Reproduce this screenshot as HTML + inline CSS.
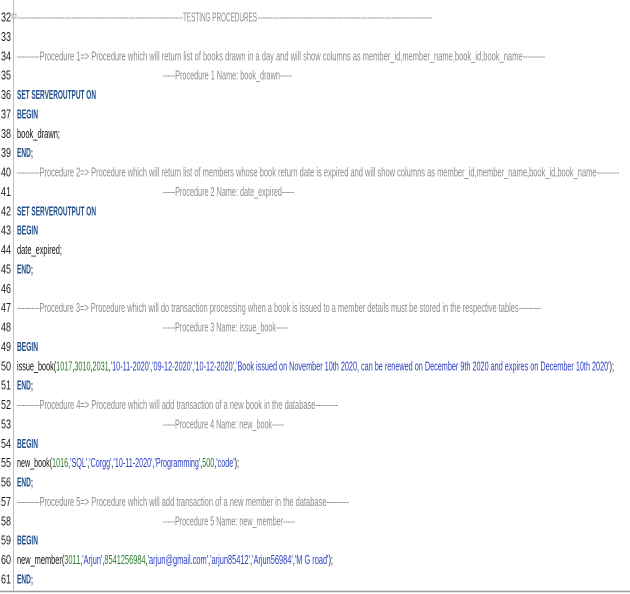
<!DOCTYPE html>
<html><head><meta charset="utf-8"><style>
html,body{margin:0;padding:0;background:#fff;width:630px;height:594px;overflow:hidden}
svg{display:block}
text{font-family:"Liberation Sans",sans-serif;font-size:12.5px}
.n{fill:#222;font-size:13px}
.c{fill:#8c8c8c}
.k{fill:#1f4e8c;font-weight:bold}
.g{fill:#2e7d32}
.s{fill:#2b3fc4}
.p{fill:#111}
</style></head><body>
<svg width="630" height="594" xmlns="http://www.w3.org/2000/svg">
<line x1="13.5" y1="0" x2="13.5" y2="591" stroke="#bdbdbd" stroke-width="1"/>
<line x1="0" y1="591.5" x2="630" y2="591.5" stroke="#9a9a9a" stroke-width="1.5"/>
<rect x="12" y="14" width="4" height="4" fill="none" stroke="#888" stroke-width="0.6"/>
<g>
<text x="1" y="21.5" class="n" textLength="10" lengthAdjust="spacingAndGlyphs">32</text>
<text x="1" y="40.9" class="n" textLength="10" lengthAdjust="spacingAndGlyphs">33</text>
<text x="1" y="60.3" class="n" textLength="10" lengthAdjust="spacingAndGlyphs">34</text>
<text x="1" y="79.6" class="n" textLength="10" lengthAdjust="spacingAndGlyphs">35</text>
<text x="1" y="99" class="n" textLength="10" lengthAdjust="spacingAndGlyphs">36</text>
<text x="1" y="118.4" class="n" textLength="10" lengthAdjust="spacingAndGlyphs">37</text>
<text x="1" y="137.8" class="n" textLength="10" lengthAdjust="spacingAndGlyphs">38</text>
<text x="1" y="157.2" class="n" textLength="10" lengthAdjust="spacingAndGlyphs">39</text>
<text x="1" y="176.5" class="n" textLength="10" lengthAdjust="spacingAndGlyphs">40</text>
<text x="1" y="195.9" class="n" textLength="10" lengthAdjust="spacingAndGlyphs">41</text>
<text x="1" y="215.3" class="n" textLength="10" lengthAdjust="spacingAndGlyphs">42</text>
<text x="1" y="234.7" class="n" textLength="10" lengthAdjust="spacingAndGlyphs">43</text>
<text x="1" y="254.1" class="n" textLength="10" lengthAdjust="spacingAndGlyphs">44</text>
<text x="1" y="273.4" class="n" textLength="10" lengthAdjust="spacingAndGlyphs">45</text>
<text x="1" y="292.8" class="n" textLength="10" lengthAdjust="spacingAndGlyphs">46</text>
<text x="1" y="312.2" class="n" textLength="10" lengthAdjust="spacingAndGlyphs">47</text>
<text x="1" y="331.6" class="n" textLength="10" lengthAdjust="spacingAndGlyphs">48</text>
<text x="1" y="350.9" class="n" textLength="10" lengthAdjust="spacingAndGlyphs">49</text>
<text x="1" y="370.3" class="n" textLength="10" lengthAdjust="spacingAndGlyphs">50</text>
<text x="1" y="389.7" class="n" textLength="10" lengthAdjust="spacingAndGlyphs">51</text>
<text x="1" y="409.1" class="n" textLength="10" lengthAdjust="spacingAndGlyphs">52</text>
<text x="1" y="428.5" class="n" textLength="10" lengthAdjust="spacingAndGlyphs">53</text>
<text x="1" y="447.8" class="n" textLength="10" lengthAdjust="spacingAndGlyphs">54</text>
<text x="1" y="467.2" class="n" textLength="10" lengthAdjust="spacingAndGlyphs">55</text>
<text x="1" y="486.6" class="n" textLength="10" lengthAdjust="spacingAndGlyphs">56</text>
<text x="1" y="506" class="n" textLength="10" lengthAdjust="spacingAndGlyphs">57</text>
<text x="1" y="525.4" class="n" textLength="10" lengthAdjust="spacingAndGlyphs">58</text>
<text x="1" y="544.7" class="n" textLength="10" lengthAdjust="spacingAndGlyphs">59</text>
<text x="1" y="564.1" class="n" textLength="10" lengthAdjust="spacingAndGlyphs">60</text>
<text x="1" y="583.5" class="n" textLength="10" lengthAdjust="spacingAndGlyphs">61</text>
</g>

<text x="17" y="21.5" class="c" textLength="166" lengthAdjust="spacingAndGlyphs">----------------------------------------------------------------------</text>
<text x="183" y="21.5" class="c" textLength="74" lengthAdjust="spacingAndGlyphs">TESTING PROCEDURES</text>
<text x="258" y="21.5" class="c" textLength="174" lengthAdjust="spacingAndGlyphs">-------------------------------------------------------------------------</text>

<text x="17" y="60.3" class="c" textLength="528" lengthAdjust="spacingAndGlyphs">---------Procedure 1=&gt; Procedure which will return list of books drawn in a day and will show columns as member_id,member_name,book_id,book_name---------</text>
<text x="163" y="79.6" class="c" textLength="129" lengthAdjust="spacingAndGlyphs">-----Procedure 1 Name: book_drawn-----</text>
<text x="17" y="99" class="k" textLength="79" lengthAdjust="spacingAndGlyphs">SET SERVEROUTPUT ON</text>
<text x="17" y="118.4" class="k" textLength="21" lengthAdjust="spacingAndGlyphs">BEGIN</text>
<text x="17" y="137.8" class="p" textLength="43" lengthAdjust="spacingAndGlyphs">book_drawn;</text>
<text x="17" y="157.2" class="k" textLength="16" lengthAdjust="spacingAndGlyphs">END;</text>

<text x="17" y="176.5" class="c" textLength="602" lengthAdjust="spacingAndGlyphs">---------Procedure 2=&gt; Procedure which will return list of members whose book return date is expired and will show columns as member_id,member_name,book_id,book_name---------</text>
<text x="163" y="195.9" class="c" textLength="131" lengthAdjust="spacingAndGlyphs">-----Procedure 2 Name: date_expired-----</text>
<text x="17" y="215.3" class="k" textLength="79" lengthAdjust="spacingAndGlyphs">SET SERVEROUTPUT ON</text>
<text x="17" y="234.7" class="k" textLength="21" lengthAdjust="spacingAndGlyphs">BEGIN</text>
<text x="17" y="254.1" class="p" textLength="45" lengthAdjust="spacingAndGlyphs">date_expired;</text>
<text x="17" y="273.4" class="k" textLength="16" lengthAdjust="spacingAndGlyphs">END;</text>

<text x="17" y="312.2" class="c" textLength="524" lengthAdjust="spacingAndGlyphs">---------Procedure 3=&gt; Procedure which will do transaction processing when a book is issued to a member details must be stored in the respective tables---------</text>
<text x="163" y="331.6" class="c" textLength="125" lengthAdjust="spacingAndGlyphs">-----Procedure 3 Name: issue_book-----</text>
<text x="17" y="350.9" class="k" textLength="21" lengthAdjust="spacingAndGlyphs">BEGIN</text>
<text x="17" y="370.3" textLength="597" lengthAdjust="spacingAndGlyphs"><tspan class="p">issue_book(</tspan><tspan class="g">1017</tspan><tspan class="p">,</tspan><tspan class="g">3010</tspan><tspan class="p">,</tspan><tspan class="g">2031</tspan><tspan class="p">,</tspan><tspan class="s">'10-11-2020'</tspan><tspan class="p">,</tspan><tspan class="s">'09-12-2020'</tspan><tspan class="p">,</tspan><tspan class="s">'10-12-2020'</tspan><tspan class="p">,</tspan><tspan class="s">'Book issued on November 10th 2020, can be renewed on December 9th 2020 and expires on December 10th 2020'</tspan><tspan class="p">);</tspan></text>
<text x="17" y="389.7" class="k" textLength="16" lengthAdjust="spacingAndGlyphs">END;</text>
<text x="17" y="409.1" class="c" textLength="321" lengthAdjust="spacingAndGlyphs">---------Procedure 4=&gt; Procedure which will add transaction of a new book in the database---------</text>
<text x="163" y="428.5" class="c" textLength="121" lengthAdjust="spacingAndGlyphs">-----Procedure 4 Name: new_book-----</text>
<text x="17" y="447.8" class="k" textLength="21" lengthAdjust="spacingAndGlyphs">BEGIN</text>
<text x="17" y="467.2" textLength="222" lengthAdjust="spacingAndGlyphs"><tspan class="p">new_book(</tspan><tspan class="g">1016</tspan><tspan class="p">,</tspan><tspan class="s">'SQL'</tspan><tspan class="p">,</tspan><tspan class="s">'Corgg'</tspan><tspan class="p">,</tspan><tspan class="s">'10-11-2020'</tspan><tspan class="p">,</tspan><tspan class="s">'Programming'</tspan><tspan class="p">,</tspan><tspan class="g">500</tspan><tspan class="p">,</tspan><tspan class="s">'code'</tspan><tspan class="p">);</tspan></text>
<text x="17" y="486.6" class="k" textLength="16" lengthAdjust="spacingAndGlyphs">END;</text>
<text x="17" y="506" class="c" textLength="332" lengthAdjust="spacingAndGlyphs">---------Procedure 5=&gt; Procedure which will add transaction of a new member in the database---------</text>
<text x="163" y="525.4" class="c" textLength="132" lengthAdjust="spacingAndGlyphs">-----Procedure 5 Name: new_member-----</text>
<text x="17" y="544.7" class="k" textLength="21" lengthAdjust="spacingAndGlyphs">BEGIN</text>
<text x="17" y="564.1" textLength="316" lengthAdjust="spacingAndGlyphs"><tspan class="p">new_member(</tspan><tspan class="g">3011</tspan><tspan class="p">,</tspan><tspan class="s">'Arjun'</tspan><tspan class="p">,</tspan><tspan class="g">8541256984</tspan><tspan class="p">,</tspan><tspan class="s">'arjun@gmail.com'</tspan><tspan class="p">,</tspan><tspan class="s">'arjun85412'</tspan><tspan class="p">,</tspan><tspan class="s">'Arjun56984'</tspan><tspan class="p">,</tspan><tspan class="s">'M G road'</tspan><tspan class="p">);</tspan></text>
<text x="17" y="583.5" class="k" textLength="16" lengthAdjust="spacingAndGlyphs">END;</text>
</svg>
</body></html>
